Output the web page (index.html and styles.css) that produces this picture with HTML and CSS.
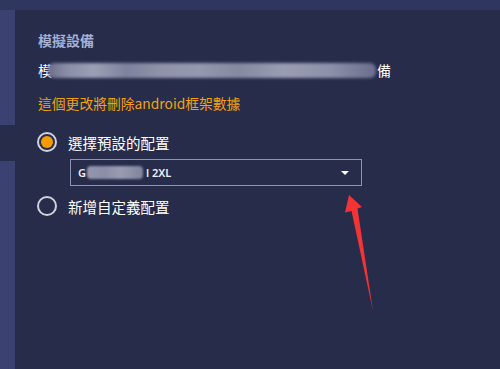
FILE: index.html
```html
<!DOCTYPE html>
<html>
<head>
<meta charset="utf-8">
<link rel="stylesheet" href="styles.css">
</head>
<body>
<div class="app">
  <div class="topbar"></div>
  <div class="body">
    <div class="sidebar">
      <div class="nav-block nav-top"></div>
      <div class="nav-gap"></div>
      <div class="nav-block nav-rest"></div>
    </div>
    <div class="main">
      <div class="title">模擬設備</div>
      <div class="line">
        <span class="w">模</span><span class="blur"></span><span class="w">備</span>
      </div>
      <div class="warn">這個更改將刪除android框架數據</div>
      <div class="radio-row">
        <span class="radio checked"><span class="dot"></span></span>
        <span class="label">選擇預設的配置</span>
      </div>
      <div class="select">
        <span class="sel-text">G</span><span class="sel-blur"></span><span class="sel-text">l 2XL</span>
        <span class="caret"></span>
      </div>
      <div class="radio-row second">
        <span class="radio"></span>
        <span class="label">新增自定義配置</span>
      </div>
    </div>
  </div>
  <svg class="arrow" width="500" height="369" viewBox="0 0 500 369">
    <polygon points="349,195 362,207 357.5,208.5 373,311 351.5,211 345,212.5" fill="#f23434"/>
  </svg>
</div>
</body>
</html>
```
FILE: styles.css
```css
html, body {
  margin: 0;
  padding: 0;
  background: #272c4b;
}
.app {
  position: relative;
  width: 500px;
  height: 369px;
  display: flex;
  flex-direction: column;
  overflow: hidden;
  font-family: "Noto Sans CJK TC", "Noto Sans", sans-serif;
}
.topbar {
  height: 10px;
  background: #30375f;
  flex: none;
}
.body {
  flex: 1;
  display: flex;
}
.sidebar {
  width: 15px;
  flex: none;
  display: flex;
  flex-direction: column;
}
.nav-block {
  background: #3b4272;
}
.nav-top {
  height: 115px;
}
.nav-gap {
  height: 36px;
  background: #272c4b;
}
.nav-rest {
  flex: 1;
}
.main {
  flex: 1;
  padding: 20px 0 0 23px;
  display: flex;
  flex-direction: column;
  align-items: flex-start;
}
.title {
  font-size: 14px;
  line-height: 20px;
  height: 20px;
  color: #a5afd3;
  font-weight: 700;
}
.line {
  margin-top: 10px;
  height: 20px;
  display: flex;
  align-items: center;
  font-size: 14px;
  color: #ffffff;
}
.blur {
  display: inline-block;
  width: 328px;
  height: 15px;
  margin-left: -4px;
  margin-right: 1px;
  background: linear-gradient(90deg, #6b6f8c 0%, #8b8ea6 6%, #9c9fb5 14%, #7e829d 24%, #8f92a9 34%, #9598ae 46%, #858aa2 58%, #9a9db2 72%, #8d90a8 86%, #6a6e8c 100%);
  border-radius: 6px;
  filter: blur(1.5px);
}
.warn {
  margin-top: 13px;
  font-size: 13.8px;
  line-height: 20px;
  color: #f2a20e;
}
.radio-row {
  margin-top: 17px;
  margin-left: -1px;
  height: 24px;
  display: flex;
  align-items: center;
}
.radio-row.second {
  margin-top: 8px;
}
.radio {
  width: 20px;
  height: 20px;
  box-sizing: border-box;
  border: 2px solid #cfd1dc;
  border-radius: 50%;
  display: flex;
  align-items: center;
  justify-content: center;
}
.dot {
  width: 12px;
  height: 12px;
  border-radius: 50%;
  background: #f59c00;
}
.label {
  margin-left: 11px;
  font-size: 14.5px;
  color: #ffffff;
}
.select {
  position: relative;
  margin-top: 5px;
  margin-left: 32px;
  width: 292px;
  height: 27px;
  box-sizing: border-box;
  border: 1px solid #8b93b7;
  display: flex;
  align-items: center;
  padding-left: 7px;
}
.sel-text {
  font-family: "Noto Sans", sans-serif;
  font-size: 11px;
  font-weight: 600;
  color: #eef0f6;
}
.sel-blur {
  display: inline-block;
  width: 56px;
  height: 13px;
  margin: 0 3px 0 1px;
  background: linear-gradient(90deg, #9597ad 0%, #8a8da6 30%, #9a9cb1 60%, #7f839e 100%);
  border-radius: 4px;
  filter: blur(1px);
}
.caret {
  margin-left: auto;
  margin-right: 12px;
  width: 0;
  height: 0;
  border-left: 4px solid transparent;
  border-right: 4px solid transparent;
  border-top: 4px solid #ffffff;
}
.arrow {
  position: absolute;
  left: 0;
  top: 0;
  pointer-events: none;
}
```
